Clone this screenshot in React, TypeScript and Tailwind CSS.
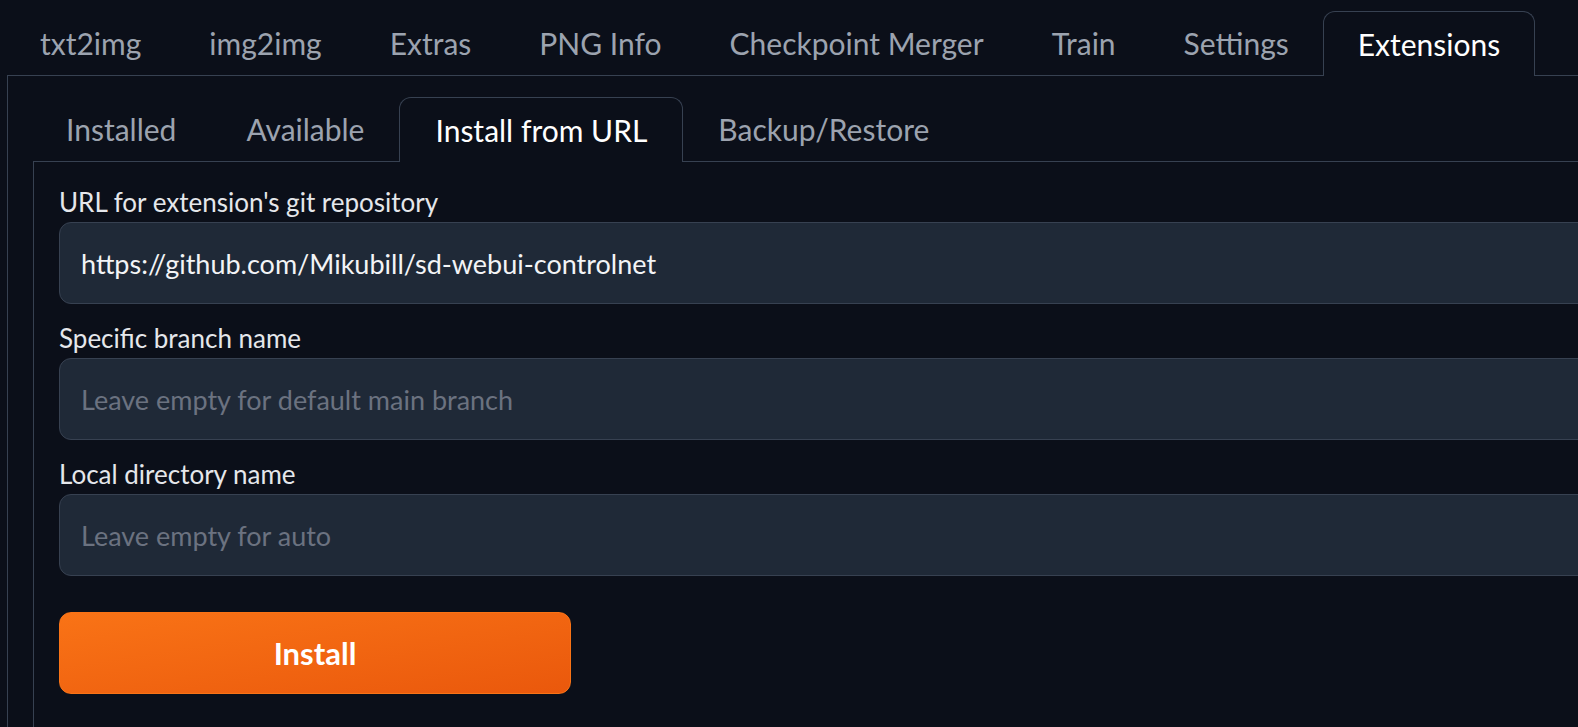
import React from "react";

const topTabs = ["txt2img", "img2img", "Extras", "PNG Info", "Checkpoint Merger", "Train", "Settings", "Extensions"];
const subTabs = ["Installed", "Available", "Install from URL", "Backup/Restore"];

function TabRow({ tabs, active, className, pad }: { tabs: string[]; active: string; className?: string; pad: string }) {
  return (
    <div className={`flex items-end ${className ?? ""}`}>
      {tabs.map((t) =>
        t === active ? (
          <div
            key={t}
            className={`relative z-10 -mb-px flex h-[65px] items-center rounded-t-[12px] border border-b-0 border-[#374151] bg-[#0b0f19] text-white ${pad}`}
          >
            {t}
          </div>
        ) : (
          <div key={t} className={`flex h-[64px] items-center text-[#9ca3af] ${pad}`}>
            {t}
          </div>
        )
      )}
    </div>
  );
}

function Field({ label, value, placeholder }: { label: string; value?: string; placeholder?: string }) {
  return (
    <label className="flex flex-col">
      <span className="text-[26px] leading-[32px] text-[#e5e7eb]">{label}</span>
      <input
        readOnly
        defaultValue={value}
        placeholder={placeholder}
        className="mt-[4px] h-[82px] w-full rounded-[12px] border border-[#374151] bg-[#1f2937] px-[21px] text-[27px] text-[#f3f4f6] outline-none placeholder:text-[#6b7280]"
      />
    </label>
  );
}

export default function App() {
  return (
    <div className="h-[727px] w-full overflow-hidden bg-[#0b0f19] font-['Lato','Liberation_Sans',sans-serif]">
      <TabRow tabs={topTabs} active="Extensions" pad="px-[34px]" className="ml-[6px] pt-[11px] text-[30px]" />

      <div className="ml-[7px] w-[1700px] border-l border-t border-[#374151] pt-[21px]">
        <TabRow tabs={subTabs} active="Install from URL" pad="px-[35px]" className="ml-[23px] text-[30px]" />

        <div className="ml-[25px] flex h-[600px] flex-col gap-[18px] border-l border-t border-[#374151] pl-[25px] pt-[24px]">
          <Field label="URL for extension's git repository" value="https://github.com/Mikubill/sd-webui-controlnet" />
          <Field label="Specific branch name" placeholder="Leave empty for default main branch" />
          <Field label="Local directory name" placeholder="Leave empty for auto" />

          <button className="mt-[18px] h-[82px] w-[512px] rounded-[12px] border border-[#f97316] bg-linear-to-br from-[#f97316] to-[#ea580c] text-[31px] font-bold text-white">
            Install
          </button>
        </div>
      </div>
    </div>
  );
}
